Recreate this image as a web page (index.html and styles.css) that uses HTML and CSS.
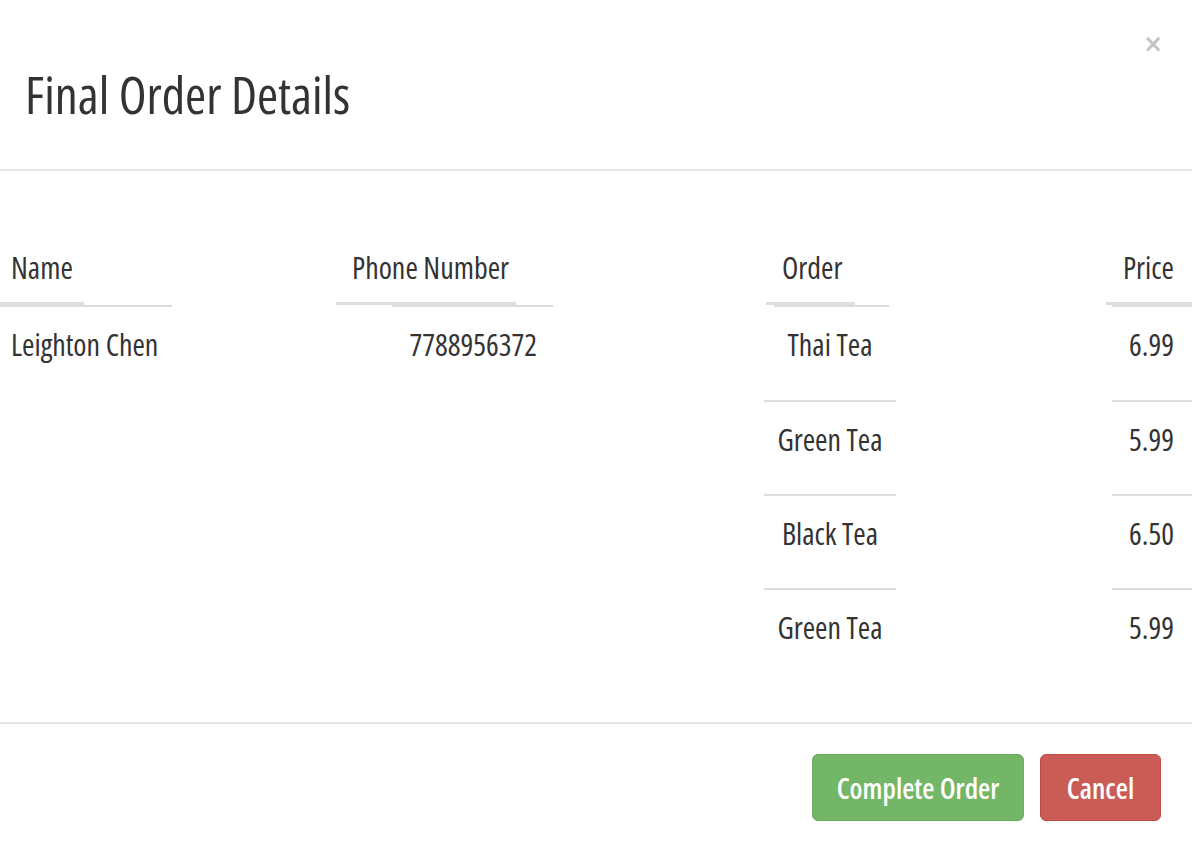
FILE: index.html
```html
<!DOCTYPE html>
<html lang="en">
<head>
<meta charset="utf-8">
<title>Final Order Details</title>
<link rel="stylesheet" href="styles.css">
</head>
<body>
<div class="modal">
  <div class="modal-header">
    <h1 class="modal-title">Final Order Details</h1>
    <button class="close" type="button" aria-label="Close">&times;</button>
  </div>
  <div class="modal-body">
    <div class="col col-name">
      <div class="th th-name">Name</div>
      <div class="td">Leighton Chen</div>
    </div>
    <div class="col col-phone">
      <div class="th th-phone">Phone Number</div>
      <div class="td td-right">7788956372</div>
    </div>
    <div class="col col-order">
      <div class="th th-order">Order</div>
      <div class="td td-center">Thai Tea</div>
      <div class="td td-center">Green Tea</div>
      <div class="td td-center">Black Tea</div>
      <div class="td td-center">Green Tea</div>
    </div>
    <div class="col col-price">
      <div class="th th-price">Price</div>
      <div class="td td-right">6.99</div>
      <div class="td td-right">5.99</div>
      <div class="td td-right">6.50</div>
      <div class="td td-right">5.99</div>
    </div>
  </div>
  <div class="modal-footer">
    <button class="btn btn-success" type="button">Complete Order</button>
    <button class="btn btn-danger" type="button">Cancel</button>
  </div>
</div>
</body>
</html>
```
FILE: styles.css
```css
* { box-sizing: border-box; }

body {
  margin: 0;
  background: #fff;
  color: #333;
  font-family: "Open Sans", "DejaVu Sans Condensed", sans-serif;
  font-stretch: 75%;
  font-weight: 500;
}

.modal {
  width: 1192px;
  height: 846px;
  display: flex;
  flex-direction: column;
}

.modal-header {
  height: 171px;
  border-bottom: 2px solid #e5e5e5;
  display: flex;
  justify-content: space-between;
  align-items: flex-start;
  padding: 30px 29px 0 25px;
}

.modal-title {
  margin: 34px 0 0;
  font-size: 51px;
  font-weight: 500;
  line-height: 60px;
  color: #333;
}

.close {
  border: 0;
  background: none;
  padding: 0;
  margin-top: 2px;
  font-family: "DejaVu Sans", sans-serif;
  font-stretch: normal;
  font-size: 24px;
  font-weight: bold;
  line-height: 24px;
  color: #c4c4c4;
}

.modal-body {
  height: 551px;
  display: flex;
  align-items: flex-start;
  padding-top: 77px;
}

.col { display: flex; flex-direction: column; }
.col-name { width: 172px; }
.col-phone { width: 217px; margin-left: 164px; }
.col-order { width: 132px; margin-left: 211px; }
.col-price { width: 86px; margin-left: 210px; }

.th {
  position: relative;
  font-size: 30px;
  font-weight: 500;
  line-height: 40px;
  height: 59px;
  padding-bottom: 19px;
  white-space: nowrap;
}
.th::before,
.th::after {
  content: "";
  position: absolute;
  background: #ddd;
}
.th::before { bottom: 2px; height: 3px; }
.th::after { bottom: 0; height: 2px; }

.th-name { padding-left: 11px; }
.th-name::before { left: 0; width: 84px; }
.th-name::after { left: 0; right: 0; }

.th-phone { padding-left: 16px; }
.th-phone::before { left: 0; width: 180px; }
.th-phone::after { left: 56px; right: 0; }

.th-order { padding-left: 18px; }
.th-order::before { left: 2px; width: 89px; }
.th-order::after { left: 10px; right: 7px; }

.th-price { text-align: right; padding-right: 18px; }
.th-price::before { left: 0; right: 0; }
.th-price::after { left: 6px; right: 0; }

.td {
  height: 93px;
  display: flex;
  align-items: flex-start;
  padding-top: 18px;
  padding-left: 11px;
  font-size: 30px;
  line-height: 40px;
  white-space: nowrap;
}
.td + .td { border-top: 2px solid #ddd; height: 94px; }
.td-center { justify-content: center; padding-left: 0; }
.td-right { justify-content: flex-end; padding-left: 0; padding-right: 16px; }
.col-price .td { padding-right: 18px; }
.col-price .td + .td { margin-left: 6px; }

.modal-footer {
  flex: 1;
  display: flex;
  justify-content: flex-end;
  align-items: flex-start;
  gap: 16px;
  padding: 30px 31px 0;
  border-top: 2px solid #e5e5e5;
}

.btn {
  height: 67px;
  border-radius: 6px;
  border: 1px solid transparent;
  color: #fff;
  font-family: inherit;
  font-stretch: 75%;
  font-size: 28px;
  font-weight: 600;
  line-height: 40px;
  padding: 0;
  cursor: pointer;
  white-space: nowrap;
}
.btn-success { background: #74b667; border-color: #69ac5c; width: 212px; }
.btn-danger { background: #c95c55; border-color: #c34c45; width: 121px; }
```
